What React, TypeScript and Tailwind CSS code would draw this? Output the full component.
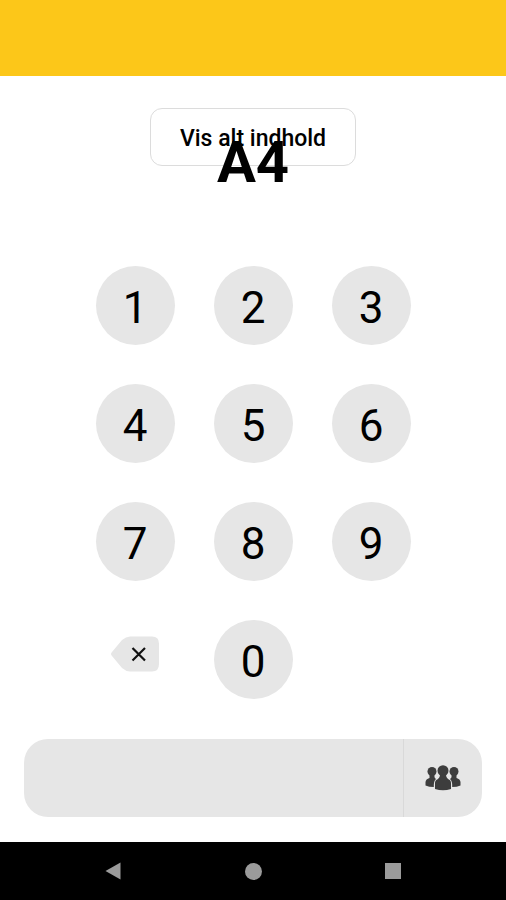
import React, { useState } from "react";

const DIGITS = ["1", "2", "3", "4", "5", "6", "7", "8", "9"];

const BackspaceIcon = () => (
  <svg width="48" height="36" viewBox="0 0 48 36" aria-hidden="true">
    <path
      d="M1 16 L11 4 Q15 0.5 19 0.5 H41 Q48 0.5 48 7.5 V28 Q48 35.5 41 35.5 H19 Q15 35.5 11 32 L1 20 Q-1 18 1 16 Z"
      fill="#e6e6e6"
    />
    <path d="M21.5 12 L34 24.5 M34 12 L21.5 24.5" stroke="#111" strokeWidth="2.2" fill="none" />
  </svg>
);

const PeopleIcon = () => (
  <svg width="36" height="26" viewBox="0 0 36 26" aria-hidden="true">
    <g fill="#3d3d3d">
      <circle cx="7" cy="6.5" r="4.5" />
      <path d="M4.5 9.5 H9.5 Q9 13 11 14 Q8.5 16 8.8 22 Q4 22 0.5 20.5 V17 Q0.8 14 4.5 13 Z" />
      <circle cx="29" cy="6.5" r="4.5" />
      <path d="M31.5 9.5 H26.5 Q27 13 25 14 Q27.5 16 27.2 22 Q32 22 35.5 20.5 V17 Q35.2 14 31.5 13 Z" />
      <circle cx="18" cy="5.7" r="5.5" />
      <path d="M15 9.5 H21 Q21 13 23 14 Q26 15 26 18 V24 Q18 26.5 10 24 V18 Q10 15 13 14 Q15 13 15 9.5 Z" />
    </g>
  </svg>
);

interface KeyProps {
  label: string;
  onPress: (digit: string) => void;
}

const Key: React.FC<KeyProps> = ({ label, onPress }) => (
  <button
    type="button"
    onClick={() => onPress(label)}
    className="flex size-[79px] items-center justify-center rounded-full bg-[#e6e6e6] pt-1 text-[44px] leading-none"
  >
    {label}
  </button>
);

const App: React.FC = () => {
  const [code, setCode] = useState("");

  const handlePress = (digit: string) => setCode((prev) => prev + digit);
  const handleDelete = () => setCode((prev) => prev.slice(0, -1));

  return (
    <div className="flex min-h-screen flex-col bg-white font-[Roboto,sans-serif] text-black">
      <header className="h-[76px] bg-[#fcc719]" />

      <main className="flex grow flex-col items-center px-6 pt-8 pb-6">
        <button
          type="button"
          className="h-[58px] rounded-xl border border-[#dcdcdc] px-[29px] pt-0.5 text-[23px] leading-none font-medium"
        >
          Vis alt indhold
        </button>
        {/* the heading runs up over the button */}
        <h1 className="pointer-events-none relative -mt-[33px] text-[58px] leading-none font-bold">A4</h1>

        <div className="mt-[75px] grid grid-cols-3 gap-[39px]">
          {DIGITS.map((digit) => (
            <Key key={digit} label={digit} onPress={handlePress} />
          ))}
          <button
            type="button"
            aria-label="Slet"
            onClick={handleDelete}
            className="flex h-[68px] items-center justify-center"
          >
            <BackspaceIcon />
          </button>
          <Key label="0" onPress={handlePress} />
        </div>

        <div className="mt-10 flex h-[78px] w-full overflow-hidden rounded-3xl bg-[#e6e6e6]">
          <input
            type="text"
            aria-label="Kode"
            value={code}
            onChange={(e) => setCode(e.target.value)}
            className="min-w-0 grow px-6 text-3xl outline-none"
          />
          <button
            type="button"
            aria-label="Grupper"
            className="flex w-[79px] shrink-0 items-center justify-center border-l border-[#d9d9d9]"
          >
            <PeopleIcon />
          </button>
        </div>
      </main>

      <nav className="flex h-[58px] items-center justify-center gap-[116px] bg-black">
        <button type="button" aria-label="Tilbage" className="flex size-6 items-center justify-center">
          <svg width="16" height="18" viewBox="0 0 16 18" aria-hidden="true">
            <path d="M15.5 0.5 V17.5 L0.5 9 Z" fill="#9b9b9b" />
          </svg>
        </button>
        <button type="button" aria-label="Hjem" className="flex size-6 items-center justify-center">
          <span className="size-[17px] rounded-full bg-[#9b9b9b]" />
        </button>
        <button type="button" aria-label="Seneste" className="flex size-6 items-center justify-center">
          <span className="size-4 bg-[#9b9b9b]" />
        </button>
      </nav>
    </div>
  );
};

export default App;
